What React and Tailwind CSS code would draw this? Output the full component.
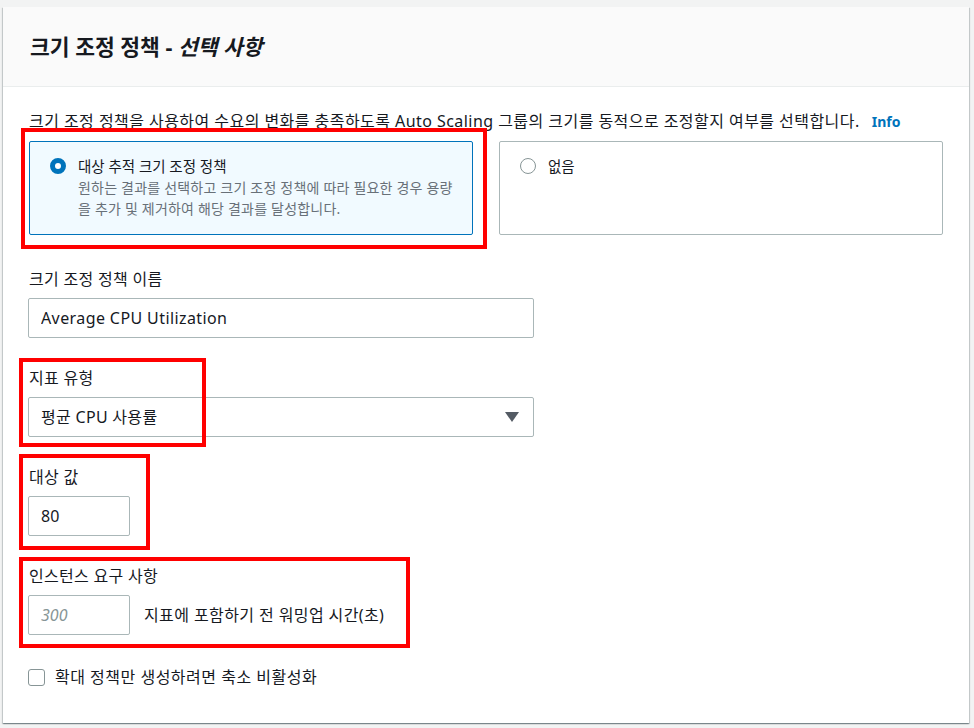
import { useState } from "react";

const FONT = { fontFamily: '"Noto Sans", "Noto Sans CJK KR", sans-serif' };

function Radio({ checked }) {
  return checked ? (
    <span className="w-4 h-4 rounded-full border-[5px] border-[#0073bb] bg-white flex-shrink-0" />
  ) : (
    <span className="w-4 h-4 rounded-full border-[1.5px] border-[#879596] bg-white flex-shrink-0" />
  );
}

function Field({ label, children }) {
  return (
    <div className="flex flex-col gap-2">
      <label className="text-[16px] leading-[22px] tracking-[0.3px] text-[#16191f]">{label}</label>
      {children}
    </div>
  );
}

export default function App() {
  const [policy, setPolicy] = useState("target");
  const [scaleInOff, setScaleInOff] = useState(false);

  return (
    <div className="relative min-h-[728px] bg-[#f2f3f3] pt-[7px] pl-[3px] pr-[5px] pb-[5px]" style={FONT}>
      {/* Card */}
      <div className="bg-white shadow-[0_1px_1px_0_rgba(0,28,36,0.3),1px_1px_1px_0_rgba(0,28,36,0.15),-1px_1px_1px_0_rgba(0,28,36,0.15)]">
        {/* Header */}
        <div className="h-[80px] bg-[#fafafa] border-b border-[#eaeded] flex items-center px-[27px]">
          <h2 className="text-[21.5px] font-bold text-[#16191f] leading-[28px]">
            크기 조정 정책 - <i>선택 사항</i>
          </h2>
        </div>

        {/* Body */}
        <div className="pl-[26px] pr-[26px] pt-[23px] pb-[35px] text-[#16191f]">
          <p className="text-[16px] leading-[22px] tracking-[0.45px]">
            크기 조정 정책을 사용하여 수요의 변화를 충족하도록 Auto Scaling 그룹의 크기를 동적으로 조정할지 여부를 선택합니다.
            <a className="ml-3 text-[14px] font-bold text-[#0073bb] tracking-normal">Info</a>
          </p>

          {/* Tiles */}
          <div className="mt-2 grid grid-cols-2 gap-[26px]">
            <div
              onClick={() => setPolicy("target")}
              className={`h-[94px] cursor-pointer rounded-[2px] border pl-5 pr-2 pt-[13px] ${
                policy === "target" ? "border-[#0073bb] bg-[#f1faff]" : "border-[#aab7b8] bg-white"
              }`}
            >
              <div className="flex items-center gap-3">
                <Radio checked={policy === "target"} />
                <span className="text-[14.5px] leading-[22px]">대상 추적 크기 조정 정책</span>
              </div>
              <p className="ml-7 text-sm leading-[21px] text-[#687078] tracking-[0.2px] whitespace-nowrap">
                원하는 결과를 선택하고 크기 조정 정책에 따라 필요한 경우 용량
                <br />을 추가 및 제거하여 해당 결과를 달성합니다.
              </p>
            </div>
            <div
              onClick={() => setPolicy("none")}
              className={`h-[94px] cursor-pointer rounded-[2px] border pl-5 pr-2 pt-[13px] ${
                policy === "none" ? "border-[#0073bb] bg-[#f1faff]" : "border-[#aab7b8] bg-white"
              }`}
            >
              <div className="flex items-center gap-3">
                <Radio checked={policy === "none"} />
                <span className="text-[14.5px] leading-[22px]">없음</span>
              </div>
            </div>
          </div>

          <div className="mt-[33px] flex flex-col gap-[29px]">
            <Field label="크기 조정 정책 이름">
              <input
                defaultValue="Average CPU Utilization"
                className="w-[506px] h-[40px] -ml-[1px] border border-[#aab7b8] rounded-[2px] px-3 text-[16px] tracking-[0.4px] text-[#16191f] outline-none"
              />
            </Field>

            <Field label="지표 유형">
              <button className="w-[506px] h-[40px] -ml-[1px] border border-[#aab7b8] rounded-[2px] px-3 flex items-center justify-between text-[16px] tracking-[0.3px] text-[#16191f] bg-white">
                <span>평균 CPU 사용률</span>
                <svg width="14" height="10" viewBox="0 0 14 10" className="mr-[2px]">
                  <path d="M0 0 H14 L7 10 Z" fill="#545b64" />
                </svg>
              </button>
            </Field>

            <Field label="대상 값">
              <input
                defaultValue="80"
                className="w-[102px] h-[40px] -ml-[1px] border border-[#aab7b8] rounded-[2px] px-3 text-[16px] text-[#16191f] outline-none"
              />
            </Field>

            <Field label="인스턴스 요구 사항">
              <div className="flex items-center gap-[14px]">
                <input
                  placeholder="300"
                  className="w-[102px] h-[40px] -ml-[1px] border border-[#aab7b8] rounded-[2px] px-3 text-[16px] text-[#16191f] outline-none placeholder:italic placeholder:text-[#879596]"
                />
                <span className="text-[16px] tracking-[0.4px]">지표에 포함하기 전 워밍업 시간(초)</span>
              </div>
            </Field>
          </div>

          <label className="mt-[31px] flex items-center gap-[10px] cursor-pointer">
            <span
              onClick={() => setScaleInOff(!scaleInOff)}
              className={`w-[17px] h-[17px] -ml-[1px] rounded-[3px] border-[1.5px] ${
                scaleInOff ? "border-[#0073bb] bg-[#0073bb]" : "border-[#879596] bg-white"
              }`}
            />
            <span className="text-[16px] leading-[22px] tracking-[0.5px]">확대 정책만 생성하려면 축소 비활성화</span>
          </label>
        </div>
      </div>

      {/* Red annotation boxes */}
      <div className="absolute left-[21px] top-[128px] w-[466px] h-[121px] border-4 border-[#ff0000] pointer-events-none" />
      <div className="absolute left-[19px] top-[358px] w-[187px] h-[89px] border-4 border-[#ff0000] pointer-events-none" />
      <div className="absolute left-[19px] top-[454px] w-[131px] h-[96px] border-4 border-[#ff0000] pointer-events-none" />
      <div className="absolute left-[19px] top-[557px] w-[391px] h-[91px] border-4 border-[#ff0000] pointer-events-none" />
    </div>
  );
}
